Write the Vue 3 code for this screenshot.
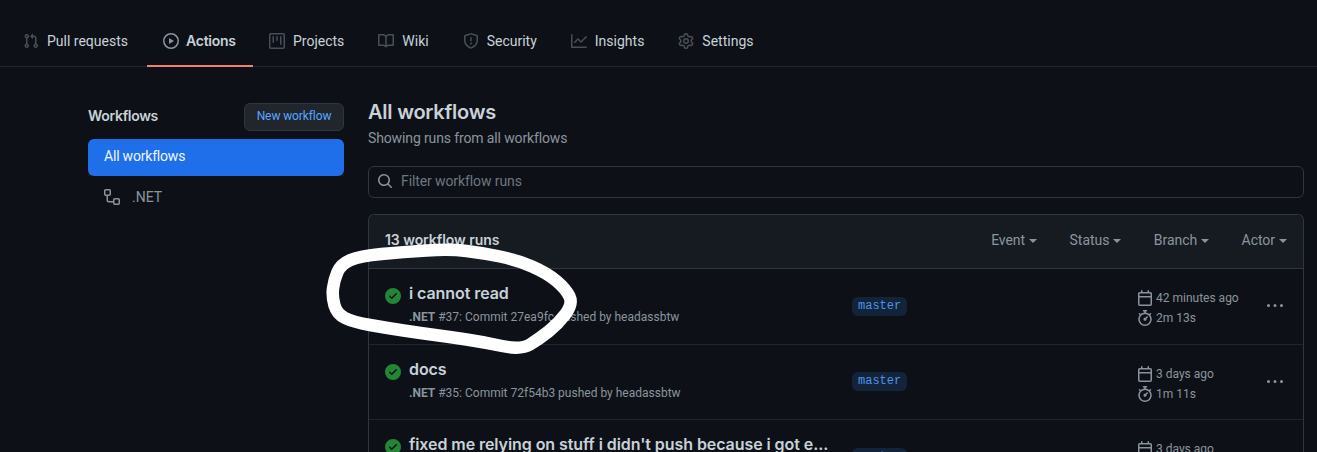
<template>
  <div class="page">
    <!-- Repo tabs -->
    <nav class="tabs">
      <a v-for="t in tabs" :key="t.label" class="tab" :class="{ active: t.active }">
        <svg class="icon tab-icon" viewBox="0 0 16 16"><path fill-rule="evenodd" :d="icons[t.icon]" /></svg>
        {{ t.label }}
      </a>
    </nav>

    <div class="content">
      <!-- Sidebar -->
      <aside class="sidebar">
        <div class="side-head">
          <span class="side-title">Workflows</span>
          <button class="btn-new">New workflow</button>
        </div>
        <a class="side-item selected">All workflows</a>
        <a class="side-item">
          <svg class="icon side-icon" viewBox="0 0 16 16"><path fill-rule="evenodd" :d="icons.workflow" /></svg>
          .NET
        </a>
      </aside>

      <!-- Main -->
      <main class="main">
        <h2 class="main-title">All workflows</h2>
        <p class="main-sub">Showing runs from all workflows</p>

        <div class="filter">
          <svg class="icon search-icon" viewBox="0 0 16 16"><path fill-rule="evenodd" :d="icons.search" /></svg>
          <span>Filter workflow runs</span>
        </div>

        <div class="box">
          <div class="box-head">
            <strong class="count">13 workflow runs</strong>
            <div class="selects">
              <span v-for="s in selects" :key="s" class="select">{{ s }}<i class="caret"></i></span>
            </div>
          </div>

          <div v-for="r in runs" :key="r.num" class="run">
            <svg class="status" viewBox="0 0 16 16"><path fill-rule="evenodd" :d="icons.check" /></svg>
            <div class="run-text">
              <div class="run-title">{{ r.title }}</div>
              <div class="run-meta"><b>.NET</b> #{{ r.num }}: Commit {{ r.sha }} pushed by headassbtw</div>
            </div>
            <div class="branch-col"><span class="branch">master</span></div>
            <div class="times">
              <div class="time">
                <svg class="icon" viewBox="0 0 16 16"><path fill-rule="evenodd" :d="icons.calendar" /></svg>
                <span>{{ r.ago }}</span>
              </div>
              <div class="time">
                <svg class="icon" viewBox="0 0 16 16"><path fill-rule="evenodd" :d="icons.stopwatch" /></svg>
                <span>{{ r.took }}</span>
              </div>
            </div>
            <svg class="icon kebab" viewBox="0 0 16 16"><path fill-rule="evenodd" :d="icons.kebab" /></svg>
          </div>
        </div>
      </main>
    </div>

    <!-- hand drawn circle on top of the screenshot -->
    <svg class="scribble" width="1317" height="452" viewBox="0 0 1317 452">
      <path :d="scribble" fill="none" stroke="#fff" stroke-width="12.5" stroke-linejoin="round" />
    </svg>
  </div>
</template>

<script setup>
const icons = {
  pull: 'M7.177 3.073L9.573.677A.25.25 0 0110 .854v4.792a.25.25 0 01-.427.177L7.177 3.427a.25.25 0 010-.354zM3.75 2.5a.75.75 0 100 1.5.75.75 0 000-1.5zm-2.25.75a2.25 2.25 0 113 2.122v5.256a2.251 2.251 0 11-1.5 0V5.372A2.25 2.25 0 011.5 3.25zM11 2.5h-1V4h1a1 1 0 011 1v5.628a2.251 2.251 0 101.5 0V5A2.5 2.5 0 0011 2.5zm1 10.25a.75.75 0 111.5 0 .75.75 0 01-1.5 0zM3.75 12a.75.75 0 100 1.5.75.75 0 000-1.5z',
  play: 'M1.5 8a6.5 6.5 0 1113 0 6.5 6.5 0 01-13 0zM8 0a8 8 0 100 16A8 8 0 008 0zM6.379 5.227A.25.25 0 006 5.442v5.117a.25.25 0 00.379.214l4.264-2.559a.25.25 0 000-.428L6.379 5.227z',
  project: 'M1.75 0A1.75 1.75 0 000 1.75v12.5C0 15.216.784 16 1.75 16h12.5A1.75 1.75 0 0016 14.25V1.75A1.75 1.75 0 0014.25 0H1.75zM1.5 1.75a.25.25 0 01.25-.25h12.5a.25.25 0 01.25.25v12.5a.25.25 0 01-.25.25H1.75a.25.25 0 01-.25-.25V1.75zM11.75 3a.75.75 0 00-.75.75v7.5a.75.75 0 001.5 0v-7.5a.75.75 0 00-.75-.75zm-8.25.75a.75.75 0 011.5 0v5.5a.75.75 0 01-1.5 0v-5.5zM8 3a.75.75 0 00-.75.75v3.5a.75.75 0 001.5 0v-3.5A.75.75 0 008 3z',
  book: 'M0 1.75A.75.75 0 01.75 1h4.253c1.227 0 2.317.59 3 1.501A3.744 3.744 0 0111.006 1h4.245a.75.75 0 01.75.75v10.5a.75.75 0 01-.75.75h-4.507a2.25 2.25 0 00-1.591.659l-.622.621a.75.75 0 01-1.06 0l-.622-.621A2.25 2.25 0 005.258 13H.75a.75.75 0 01-.75-.75V1.75zm8.755 3a2.25 2.25 0 012.25-2.25H14.5v9h-3.757c-.71 0-1.4.201-1.992.572l.004-7.322zm-1.504 7.324l.004-5.073-.002-2.253A2.25 2.25 0 005.003 2.5H1.5v9h3.757a3.75 3.75 0 011.994.574z',
  shield: 'M7.467.133a1.75 1.75 0 011.066 0l5.25 1.68A1.75 1.75 0 0115 3.48V7c0 1.566-.32 3.182-1.303 4.682-.983 1.498-2.585 2.813-5.032 3.855a1.7 1.7 0 01-1.33 0c-2.447-1.042-4.049-2.357-5.032-3.855C1.32 10.182 1 8.566 1 7V3.48a1.75 1.75 0 011.217-1.667l5.25-1.68zm.61 1.429a.25.25 0 00-.153 0l-5.25 1.68a.25.25 0 00-.174.238V7c0 1.358.275 2.666 1.057 3.86.784 1.194 2.121 2.34 4.366 3.297a.2.2 0 00.154 0c2.245-.956 3.582-2.104 4.366-3.298C13.225 9.666 13.5 8.36 13.5 7V3.48a.25.25 0 00-.174-.237l-5.25-1.68zM9 10.5a1 1 0 11-2 0 1 1 0 012 0zm-.25-5.75a.75.75 0 10-1.5 0v3a.75.75 0 001.5 0v-3z',
  graph: 'M1.5 1.75a.75.75 0 00-1.5 0v12.5c0 .414.336.75.75.75h14.5a.75.75 0 000-1.5H1.5V1.75zm14.28 2.53a.75.75 0 00-1.06-1.06L10 7.94 7.53 5.47a.75.75 0 00-1.06 0L3.22 8.72a.75.75 0 001.06 1.06L7 7.06l2.47 2.47a.75.75 0 001.06 0l5.25-5.25z',
  gear: 'M7.429 1.525a6.593 6.593 0 011.142 0c.036.003.108.036.137.146l.289 1.105c.147.56.55.967.997 1.189.174.086.341.183.501.29.417.278.97.423 1.53.27l1.102-.303c.11-.03.175.016.195.046.219.31.41.641.573.989.014.031.022.11-.059.19l-.815.806c-.411.406-.562.957-.53 1.456a4.588 4.588 0 010 .582c-.032.499.119 1.05.53 1.456l.815.806c.08.08.073.159.059.19a6.494 6.494 0 01-.573.99c-.02.029-.086.074-.195.045l-1.103-.303c-.559-.153-1.112-.008-1.529.27-.16.107-.327.204-.5.29-.449.222-.851.628-.998 1.189l-.289 1.105c-.029.11-.101.143-.137.146a6.613 6.613 0 01-1.142 0c-.036-.003-.108-.037-.137-.146l-.289-1.105c-.147-.56-.55-.967-.997-1.189a4.502 4.502 0 01-.501-.29c-.417-.278-.97-.423-1.53-.27l-1.102.303c-.11.03-.175-.016-.195-.046a6.492 6.492 0 01-.573-.989c-.014-.031-.022-.11.059-.19l.815-.806c.411-.406.562-.957.53-1.456a4.587 4.587 0 010-.582c.032-.499-.119-1.05-.53-1.456l-.815-.806c-.08-.08-.073-.159-.059-.19a6.44 6.44 0 01.573-.99c.02-.029.086-.075.195-.045l1.103.303c.559.153 1.112.008 1.529-.27.16-.107.327-.204.5-.29.449-.222.851-.628.998-1.189l.289-1.105c.029-.11.101-.143.137-.146zM8 0c-.236 0-.47.01-.701.03-.743.065-1.29.615-1.458 1.261l-.29 1.106c-.017.066-.078.158-.211.224a5.994 5.994 0 00-.668.386c-.123.082-.233.09-.3.071L3.27 2.776c-.644-.177-1.392.02-1.82.63a7.977 7.977 0 00-.704 1.217c-.315.675-.111 1.422.363 1.891l.815.806c.05.048.098.147.088.294a6.084 6.084 0 000 .772c.01.147-.038.246-.088.294l-.815.806c-.474.469-.678 1.216-.363 1.891.2.428.436.835.704 1.218.428.609 1.176.806 1.82.63l1.103-.303c.066-.019.176-.011.299.071.213.143.436.272.668.386.133.066.194.158.212.224l.289 1.106c.169.646.715 1.196 1.458 1.26a8.094 8.094 0 001.402 0c.743-.064 1.29-.614 1.458-1.26l.29-1.106c.017-.066.078-.158.211-.224a5.98 5.98 0 00.668-.386c.123-.082.233-.09.3-.071l1.102.302c.644.177 1.392-.02 1.82-.63.268-.382.505-.789.704-1.217.315-.675.111-1.422-.364-1.891l-.814-.806c-.05-.048-.098-.147-.088-.294a6.1 6.1 0 000-.772c-.01-.147.039-.246.088-.294l.814-.806c.475-.469.679-1.216.364-1.891a7.992 7.992 0 00-.704-1.218c-.428-.609-1.176-.806-1.82-.63l-1.103.303c-.066.019-.176.011-.299-.071a5.991 5.991 0 00-.668-.386c-.133-.066-.194-.158-.212-.224L10.16 1.29C9.99.645 9.444.095 8.701.031A8.094 8.094 0 008 0zm1.5 8a1.5 1.5 0 11-3 0 1.5 1.5 0 013 0zM11 8a3 3 0 11-6 0 3 3 0 016 0z',
  search: 'M11.5 7a4.499 4.499 0 11-8.998 0A4.499 4.499 0 0111.5 7zm-.82 4.74a6 6 0 111.06-1.06l3.04 3.04a.75.75 0 11-1.06 1.06l-3.04-3.04z',
  workflow: 'M0 1.75C0 .784.784 0 1.75 0h3.5C6.216 0 7 .784 7 1.75v3.5A1.75 1.75 0 015.25 7H4v4a1 1 0 001 1h4v-1.25C9 9.784 9.784 9 10.75 9h3.5c.966 0 1.75.784 1.75 1.75v3.5A1.75 1.75 0 0114.25 16h-3.5A1.75 1.75 0 019 14.25v-.75H5A2.5 2.5 0 012.5 11V7h-.75A1.75 1.75 0 010 5.25v-3.5zm1.75-.25a.25.25 0 00-.25.25v3.5c0 .138.112.25.25.25h3.5a.25.25 0 00.25-.25v-3.5a.25.25 0 00-.25-.25h-3.5zm9 9a.25.25 0 00-.25.25v3.5c0 .138.112.25.25.25h3.5a.25.25 0 00.25-.25v-3.5a.25.25 0 00-.25-.25h-3.5z',
  check: 'M8 16A8 8 0 108 0a8 8 0 000 16zm3.78-9.72a.75.75 0 00-1.06-1.06L6.75 9.19 5.28 7.72a.75.75 0 00-1.06 1.06l2 2a.75.75 0 001.06 0l4.5-4.5z',
  calendar: 'M4.75 0a.75.75 0 01.75.75V2h5V.75a.75.75 0 011.5 0V2h1.25c.966 0 1.75.784 1.75 1.75v10.5A1.75 1.75 0 0113.25 16H2.75A1.75 1.75 0 011 14.25V3.75C1 2.784 1.784 2 2.75 2H4V.75A.75.75 0 014.75 0zm0 3.5h8.5a.25.25 0 01.25.25V6h-11V3.75a.25.25 0 01.25-.25h2zm-2.25 4v6.75c0 .138.112.25.25.25h10.5a.25.25 0 00.25-.25V7.5h-11z',
  stopwatch: 'M5.75.75A.75.75 0 016.5 0h3a.75.75 0 010 1.5h-.75v1l-.001.041a6.718 6.718 0 013.464 1.435l.007-.006.75-.75a.75.75 0 111.06 1.06l-.75.75-.006.007a6.75 6.75 0 11-10.548 0L2.72 5.03l-.75-.75a.75.75 0 011.06-1.06l.75.75.007.006A6.718 6.718 0 017.25 2.541a.756.756 0 010-.041v-1H6.5a.75.75 0 01-.75-.75zM8 14.5A5.25 5.25 0 108 4a5.25 5.25 0 000 10.5zm.389-6.7l1.33-1.33a.75.75 0 111.061 1.06L9.45 8.861A1.502 1.502 0 018 10.75a1.5 1.5 0 11.389-2.95z',
  kebab: 'M8 9a1.5 1.5 0 100-3 1.5 1.5 0 000 3zM1.5 9a1.5 1.5 0 100-3 1.5 1.5 0 000 3zm13 0a1.5 1.5 0 100-3 1.5 1.5 0 000 3z'
}

const tabs = [
  { label: 'Pull requests', icon: 'pull' },
  { label: 'Actions', icon: 'play', active: true },
  { label: 'Projects', icon: 'project' },
  { label: 'Wiki', icon: 'book' },
  { label: 'Security', icon: 'shield' },
  { label: 'Insights', icon: 'graph' },
  { label: 'Settings', icon: 'gear' }
]

const selects = ['Event', 'Status', 'Branch', 'Actor']

const runs = [
  { title: 'i cannot read', num: 37, sha: '27ea9fc', ago: '42 minutes ago', took: '2m 13s' },
  { title: 'docs', num: 35, sha: '72f54b3', ago: '3 days ago', took: '1m 11s' },
  { title: "fixed me relying on stuff i didn't push because i got e...", num: 34, sha: '1c9e0a7', ago: '3 days ago', took: '1m 9s' }
]

// centre line of the marker stroke, smoothed through the midpoints
const pts = [
  [403, 252], [360, 256], [341, 264], [334, 280], [332, 297], [337, 314], [353, 322],
  [387, 328], [420, 333], [450, 337], [483, 342], [521, 350], [539, 339], [558, 324],
  [573, 304], [566, 289], [547, 273], [517, 260], [483, 253], [450, 249]
]
const mid = (a, b) => [(a[0] + b[0]) / 2, (a[1] + b[1]) / 2]
const start = mid(pts[pts.length - 1], pts[0])
const scribble = `M${start[0]} ${start[1]} ` + pts.map((p, i) => {
  const m = mid(p, pts[(i + 1) % pts.length])
  return `Q${p[0]} ${p[1]} ${m[0]} ${m[1]}`
}).join(' ') + ' Z'
</script>

<style>
html, body {
  margin: 0;
  background: #0d1117;
  height: 452px;
  overflow: hidden;
}
</style>

<style scoped>
.page {
  position: relative;
  height: 452px;
  overflow: hidden;
  background: #0d1117;
  color: #c9d1d9;
  font-family: Roboto, sans-serif;
  font-size: 14px;
  line-height: 20px;
}

.icon {
  width: 16px;
  height: 16px;
  fill: #8b949e;
  flex: none;
}

/* Tabs */
.tabs {
  display: flex;
  height: 66px;
  padding-left: 7px;
  border-bottom: 1px solid #21262d;
  align-items: flex-end;
}

.tab {
  display: flex;
  align-items: center;
  gap: 8px;
  height: 48px;
  padding: 0 16px 2px;
  margin-right: 2px;
  box-sizing: border-box;
  margin-bottom: -1px;
  border-bottom: 2px solid transparent;
  color: #c9d1d9;
}

.tab-icon {
  fill: #484f58;
}

.tab.active {
  width: 106px;
  margin-left: 1px;
  margin-right: 0;
  font-family: Inter, sans-serif;
  font-weight: 600;
  letter-spacing: -0.25px;
  gap: 7px;
  white-space: nowrap;
  border-bottom-color: #f78166;
}

.tab.active .tab-icon {
  fill: #8b949e;
}

/* Layout */
.content {
  display: flex;
  padding: 32px 13px 0 88px;
  gap: 24px;
}

.sidebar {
  width: 256px;
  flex: none;
  padding-top: 4px;
}

.side-head {
  display: flex;
  justify-content: space-between;
  align-items: center;
  height: 28px;
  margin-bottom: 8px;
}

.side-title {
  font-family: Inter, sans-serif;
  font-weight: 600;
  letter-spacing: -0.3px;
  margin-top: -2px;
}

.btn-new {
  width: 100px;
  height: 28px;
  padding: 0 0 2px;
  background: #21262d;
  border: 1px solid #30363d;
  border-radius: 6px;
  color: #58a6ff;
  font: inherit;
  font-size: 12px;
  letter-spacing: -0.1px;
}

.side-item {
  display: flex;
  align-items: center;
  gap: 12px;
  height: 37px;
  padding: 0 16px 3px;
  box-sizing: border-box;
  margin-bottom: 4px;
  border-radius: 6px;
  color: #8b949e;
}

.side-item.selected {
  background: #1f6feb;
  color: #f0f6fc;
  letter-spacing: -0.2px;
}

/* Main */
.main {
  flex: 1;
  min-width: 0;
}

.main-title {
  margin: 0;
  font-family: Inter, sans-serif;
  font-size: 20px;
  line-height: 26px;
  font-weight: 600;
  letter-spacing: -0.23px;
}

.main-sub {
  margin: 3px 0 0;
  color: #8b949e;
  letter-spacing: -0.13px;
}

.filter {
  display: flex;
  align-items: center;
  gap: 8px;
  height: 32px;
  margin-top: 18px;
  padding: 0 12px 2px 8px;
  box-sizing: border-box;
  border: 1px solid #30363d;
  border-radius: 6px;
  color: #6e7681;
  letter-spacing: -0.1px;
}

.box {
  margin-top: 16px;
  border: 1px solid #30363d;
  border-bottom: none;
  border-radius: 6px 6px 0 0;
}

.box-head {
  display: flex;
  align-items: center;
  justify-content: space-between;
  height: 53px;
  padding: 0 16px;
  background: #161b22;
  border-radius: 6px 6px 0 0;
  border-bottom: 1px solid #30363d;
}

.count {
  font-family: Inter, sans-serif;
  font-weight: 600;
  letter-spacing: -0.06px;
  margin-top: -3px;
}

.selects {
  display: flex;
  gap: 32.5px;
  color: #8b949e;
  margin-top: -3px;
  letter-spacing: -0.05px;
}

.select {
  display: flex;
  align-items: center;
}

.caret {
  display: inline-block;
  width: 0;
  height: 0;
  margin-left: 4px;
  margin-top: 1px;
  border-style: solid;
  border-width: 4px 4px 0;
  border-color: #8b949e transparent transparent;
}

.run {
  display: grid;
  grid-template-columns: 24px 443px 286px 1fr 16px;
  padding: 15px 16px 0;
  height: 75.5px;
  box-sizing: border-box;
  border-bottom: 1px solid #21262d;
}

.status {
  width: 16px;
  height: 16px;
  margin-top: 4px;
  fill: #238636;
}

.run-title {
  font-family: Inter, sans-serif;
  font-size: 16px;
  font-weight: 600;
  line-height: 20px;
  letter-spacing: -0.07px;
  white-space: nowrap;
  margin-top: -1px;
}

.run-meta {
  margin-top: 5px;
  font-size: 12px;
  line-height: 18px;
  color: #8b949e;
}

.branch-col {
  display: flex;
  align-items: center;
  height: 44.6px;
}

.branch {
  padding: 0 6px;
  height: 19px;
  line-height: 19px;
  background: #132339;
  color: #4c94ea;
  border-radius: 6px;
  font-family: "Liberation Mono", monospace;
  font-size: 12px;
}

.times {
  margin-left: -1px;
  padding-top: 4px;
  font-size: 12px;
  line-height: 18px;
  color: #8b949e;
}

.time {
  display: flex;
  align-items: center;
  gap: 3px;
  height: 20px;
}

.kebab {
  margin-top: 14px;
  margin-left: -4px;
}

/* scribble */
.scribble {
  position: absolute;
  left: 0;
  top: 0;
  pointer-events: none;
  filter: blur(0.5px);
}
</style>
